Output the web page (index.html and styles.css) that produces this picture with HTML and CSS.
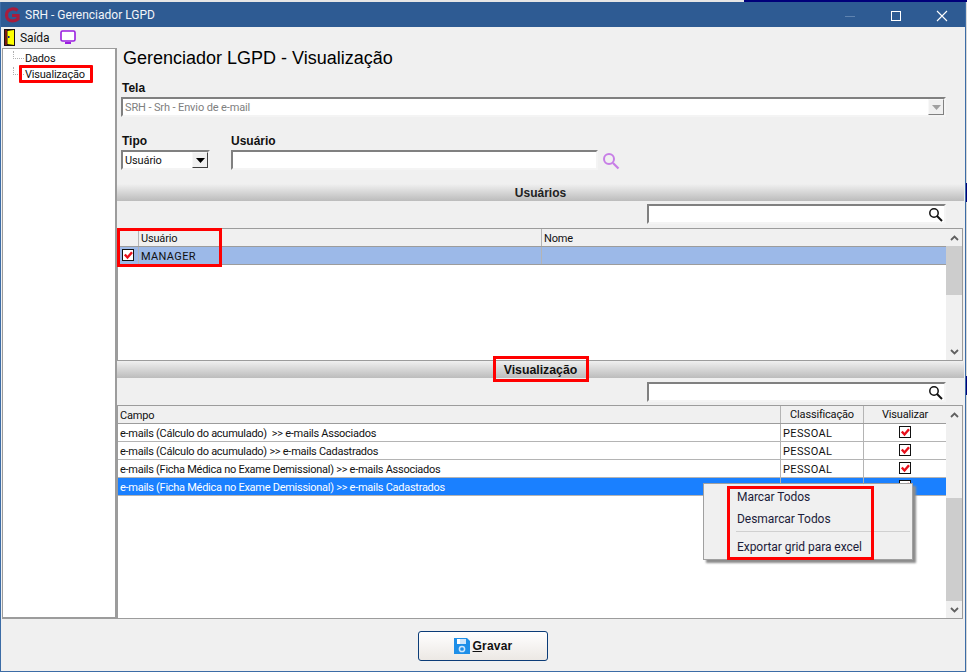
FILE: index.html
```html
<!DOCTYPE html>
<html lang="pt-BR">
<head>
<meta charset="utf-8">
<title>SRH - Gerenciador LGPD</title>
<link rel="stylesheet" href="styles.css">
</head>
<body>
<div class="topstrip"><div class="topstrip-left"></div><div class="topstrip-right"></div></div>
<div class="screen">
<div class="window">
  <header class="titlebar">
    <svg class="logo" width="17" height="16" viewBox="0 0 17 16"><path d="M13.500 3.500C12 2 10 1.600 8 2 4.500 2.800 2.500 5.200 2.500 8 2.500 11.500 5 14 8.500 14 10.500 14 12.500 13.200 14 12V8.500H8" fill="none" stroke="#a81c3c" stroke-width="3.200"/></svg>
    <span class="title-text">SRH - Gerenciador LGPD</span>
    <div class="controls">
      <svg width="46" height="24" viewBox="0 0 46 24"><path d="M18 13.500H28" stroke="#5f83b0" stroke-width="1"/></svg>
      <svg width="46" height="24" viewBox="0 0 46 24"><rect x="18.500" y="8.500" width="9" height="9" fill="none" stroke="#fff" stroke-width="1"/></svg>
      <svg width="46" height="24" viewBox="0 0 46 24"><path d="M18 8L28 18M28 8L18 18" stroke="#fff" stroke-width="1.100"/></svg>
    </div>
  </header>
  <div class="toolbar">
    <svg class="door" width="12" height="18" viewBox="0 0 12 18"><rect width="11" height="17" fill="#1a1010"/><path d="M3.500 2L10 1V16L3.500 15Z" fill="#ffff00"/><rect x="1" y="1" width="2" height="15" fill="#7a1a10"/><rect x="4" y="7" width="1.500" height="2" fill="#10208a"/></svg>
    <span class="toolbar-label">Saída</span>
    <svg class="monitor" width="17" height="15" viewBox="0 0 17 15"><rect x="1" y="1" width="14" height="10" rx="1.500" fill="#fff" stroke="#9a1ee0" stroke-width="1.600"/><rect x="5" y="12" width="6" height="2" fill="#9a1ee0"/></svg>
  </div>
  <div class="content">
    <nav class="sidebar">
      <div class="tree-row"><span class="tree-line"></span><span>Dados</span></div>
      <div class="tree-row"><span class="tree-line"></span><span>Visualização</span></div>
    </nav>
    <main class="main">
      <section class="form">
        <h1 class="page-title">Gerenciador LGPD - Visualização</h1>
        <div class="field-label tela-label">Tela</div>
        <div class="sunken combo-wide">
          <span class="combo-text">SRH - Srh - Envio de e-mail</span>
          <span class="drop drop-off"><svg width="9" height="5" viewBox="0 0 9 5"><path d="M0 0H9L4.500 5Z" fill="#a0a0a0"/></svg></span>
        </div>
        <div class="filter-row">
          <div class="tipo">
            <div class="field-label">Tipo</div>
            <div class="sunken combo-tipo">
              <span class="combo-value">Usuário</span>
              <span class="drop"><svg width="9" height="5" viewBox="0 0 9 5"><path d="M0 0H9L4.500 5Z" fill="#000"/></svg></span>
            </div>
          </div>
          <div class="usuario">
            <div class="field-label">Usuário</div>
            <div class="usuario-input">
              <div class="sunken input-user"></div>
              <svg class="purple-search" width="18" height="18" viewBox="0 0 18 18"><circle cx="7" cy="7" r="5" fill="none" stroke="#c77ee6" stroke-width="2"/><path d="M11 11L16.500 16.500" stroke="#c77ee6" stroke-width="2.200"/></svg>
            </div>
          </div>
        </div>
      </section>

      <div class="section-bar"><span>Usuários</span></div>
      <div class="search-row">
        <div class="sunken search-box">
          <svg width="15" height="15" viewBox="0 0 15 15"><circle cx="6" cy="6" r="4.200" fill="none" stroke="#111" stroke-width="1.500"/><path d="M9 9L14 14" stroke="#111" stroke-width="2"/></svg>
        </div>
      </div>
      <div class="grid grid-users">
        <div class="grid-body">
          <div class="row row-head cols-users"><div class="cell"></div><div class="cell pad">Usuário</div><div class="cell pad">Nome</div></div>
          <div class="row row-marked cols-users">
            <div class="cell cell-center"><svg class="check" width="13" height="13" viewBox="0 0 13 13"><rect x=".5" y=".5" width="11" height="11" fill="#fff" stroke="#111"/><path d="M2.800 5.500L5.500 8.500L10 3.200" fill="none" stroke="#e8101c" stroke-width="2.400"/></svg></div>
            <div class="cell pad caps">MANAGER</div><div class="cell"></div>
          </div>
        </div>
        <div class="scroll">
          <div class="arrow"><svg width="9" height="6" viewBox="0 0 9 6"><path d="M1 5L4.500 1.500L8 5" fill="none" stroke="#606060" stroke-width="1.800"/></svg></div>
          <div class="thumb thumb-users"></div>
          <div class="track"></div>
          <div class="arrow"><svg width="9" height="6" viewBox="0 0 9 6"><path d="M1 1L4.500 4.500L8 1" fill="none" stroke="#606060" stroke-width="1.800"/></svg></div>
        </div>
      </div>

      <div class="section-bar section-bar-view"><span>Visualização</span></div>
      <div class="search-row search-row-view">
        <div class="sunken search-box">
          <svg width="15" height="15" viewBox="0 0 15 15"><circle cx="6" cy="6" r="4.200" fill="none" stroke="#111" stroke-width="1.500"/><path d="M9 9L14 14" stroke="#111" stroke-width="2"/></svg>
        </div>
      </div>
      <div class="grid grid-view">
        <div class="grid-body">
          <div class="row row-head cols-view"><div class="cell pad-s">Campo</div><div class="cell cell-center">Classificação</div><div class="cell cell-center">Visualizar</div></div>
          <div class="row cols-view"><div class="cell pad-s">e-mails (Cálculo do acumulado)&nbsp; &gt;&gt; e-mails Associados</div><div class="cell pad-s caps">PESSOAL</div><div class="cell cell-center"><svg class="check" width="13" height="13" viewBox="0 0 13 13"><rect x=".5" y=".5" width="11" height="11" fill="#fff" stroke="#111"/><path d="M2.800 5.500L5.500 8.500L10 3.200" fill="none" stroke="#e8101c" stroke-width="2.400"/></svg></div></div>
          <div class="row cols-view"><div class="cell pad-s">e-mails (Cálculo do acumulado) &gt;&gt; e-mails Cadastrados</div><div class="cell pad-s caps">PESSOAL</div><div class="cell cell-center"><svg class="check" width="13" height="13" viewBox="0 0 13 13"><rect x=".5" y=".5" width="11" height="11" fill="#fff" stroke="#111"/><path d="M2.800 5.500L5.500 8.500L10 3.200" fill="none" stroke="#e8101c" stroke-width="2.400"/></svg></div></div>
          <div class="row cols-view"><div class="cell pad-s">e-mails (Ficha Médica no Exame Demissional) &gt;&gt; e-mails Associados</div><div class="cell pad-s caps">PESSOAL</div><div class="cell cell-center"><svg class="check" width="13" height="13" viewBox="0 0 13 13"><rect x=".5" y=".5" width="11" height="11" fill="#fff" stroke="#111"/><path d="M2.800 5.500L5.500 8.500L10 3.200" fill="none" stroke="#e8101c" stroke-width="2.400"/></svg></div></div>
          <div class="row row-selected cols-view"><div class="cell pad-s">e-mails (Ficha Médica no Exame Demissional) &gt;&gt; e-mails Cadastrados</div><div class="cell pad-s caps">PESSOAL</div><div class="cell cell-center"><svg class="check" width="13" height="13" viewBox="0 0 13 13"><rect x=".5" y=".5" width="11" height="11" fill="#fff" stroke="#111"/><path d="M2.800 5.500L5.500 8.500L10 3.200" fill="none" stroke="#e8101c" stroke-width="2.400"/></svg></div></div>
        </div>
        <div class="scroll">
          <div class="arrow"><svg width="9" height="6" viewBox="0 0 9 6"><path d="M1 5L4.500 1.500L8 5" fill="none" stroke="#606060" stroke-width="1.800"/></svg></div>
          <div class="track track-view"></div>
          <div class="thumb thumb-view"></div>
          <div class="arrow"><svg width="9" height="6" viewBox="0 0 9 6"><path d="M1 1L4.500 4.500L8 1" fill="none" stroke="#606060" stroke-width="1.800"/></svg></div>
        </div>
      </div>
    </main>
  </div>
  <footer class="footer">
    <button class="save" type="button">
      <svg width="16" height="16" viewBox="0 0 16 16"><path d="M0 0H13L16 3V16H0Z" fill="#1e8fe8"/><rect x="3" y="1" width="9" height="5" fill="#cfe6fa"/><rect x="3" y="1" width="3" height="5" fill="#fff"/><circle cx="8" cy="11" r="2.600" fill="none" stroke="#cfe6fa" stroke-width="1.500"/></svg>
      <span><u>G</u>ravar</span>
    </button>
  </footer>

  <div class="menu">
    <div class="menu-item">Marcar Todos</div>
    <div class="menu-item">Desmarcar Todos</div>
    <div class="menu-sep"></div>
    <div class="menu-item">Exportar grid para excel</div>
  </div>
  <div class="mark mark-tree"></div>
  <div class="mark mark-grid"></div>
  <div class="mark mark-section"></div>
  <div class="mark mark-menu"></div>
</div>
<div class="sliver"></div>
</div>
</body>
</html>
```

FILE: styles.css
```css
* { box-sizing: border-box; }
html, body { margin: 0; padding: 0; height: 100%; overflow: hidden; }
body { background: #f0f0f0; font-family: Roboto, "Liberation Sans", Arial, sans-serif; font-size: 11px; letter-spacing: -.12px; color: #111; }

.topstrip { display: flex; height: 2px; }
.topstrip-left { width: 744px; background: #e6e6e6; }
.topstrip-right { flex: 1; background: #00007a; }

.screen { display: flex; height: 670px; }
.window { position: relative; width: 966px; height: 670px; display: flex; flex-direction: column; background: #f0f0f0; border: 1px solid #3c6ca6; border-top: 0; }
.sliver { flex: 1; background: linear-gradient(#d8d8d8 0 181px, #00007a 181px 200px, #d8d8d8 200px 374px, #00007a 374px 393px, #d8d8d8 393px); }

.titlebar { height: 25px; flex: none; display: flex; align-items: center; background: #2e5b93; color: #fff; padding-left: 3px; }
.logo { flex: none; }
.title-text { margin-left: 4px; font-size: 12px; letter-spacing: 0; color: #f2f5f9; }
.controls { margin-left: auto; display: flex; align-items: center; }
.controls svg { display: block; }

.toolbar { height: 21px; flex: none; display: flex; align-items: center; padding-left: 3px; }
.door { flex: none; }
.toolbar-label { margin-left: 4px; font-size: 12px; }
.monitor { margin-left: 11px; flex: none; }

.content { height: 571px; flex: none; display: flex; }
.sidebar { width: 115px; margin-left: 1px; height: 571px; flex: none; background: #fff; border: 1px solid #9c9c9c; border-width: 1px 2px 2px 1px; padding-top: 2px; padding-left: 10px; letter-spacing: -.2px; }
.tree-row { display: flex; height: 16px; line-height: 16px; }
.tree-line { width: 11px; height: 8px; margin-right: 1px; border-left: 1px dotted #b0b0b0; border-bottom: 1px dotted #b0b0b0; }

.main { flex: 1; min-width: 0; display: flex; flex-direction: column; }
.form { height: 136px; flex: none; padding-left: 4px; }
.page-title { margin: 0 0 0 2px; height: 21px; line-height: 21px; font-family: "Liberation Sans", Arial, sans-serif; font-size: 18px; font-weight: normal; letter-spacing: 0; color: #000; }
.field-label { height: 14px; line-height: 14px; margin-left: 1px; font-family: "Liberation Sans", Arial, sans-serif; font-size: 12px; font-weight: bold; letter-spacing: 0; color: #111; margin-bottom: 2px; }
.usuario .field-label { margin-left: 0; }
.tela-label { margin-top: 12px; }

.sunken { display: flex; align-items: center; height: 20px; background: #fff; border-style: solid; border-width: 2px; border-color: #808080 #f4f4f4 #f4f4f4 #808080; }
.combo-wide { width: 825px; color: #808080; }
.combo-text { flex: 1; padding: 1px 0 0 2px; }
.drop { display: flex; align-items: center; justify-content: center; width: 16px; height: 16px; background: #f0f0f0; border: 1px solid; border-color: #f8f8f8 #404040 #404040 #f8f8f8; }
.drop-off { border-color: #f8f8f8 #808080 #808080 #f8f8f8; }

.filter-row { display: flex; margin-top: 17px; }
.tipo { width: 110px; }
.combo-tipo { width: 89px; }
.combo-value { flex: 1; padding-left: 2px; }
.usuario-input { display: flex; align-items: center; }
.input-user { width: 367px; }
.purple-search { margin-left: 4px; margin-top: 1px; }

.section-bar { height: 17px; flex: none; background: linear-gradient(#f0f0f0, #bcbcbc); text-align: center; margin-right: 1px; font-family: "Liberation Sans", Arial, sans-serif; font-weight: bold; font-size: 12px; letter-spacing: 0; line-height: 18px; color: #222; }
.section-bar-view { color: #111; font-size: 12.300px; }
.search-row { height: 27px; flex: none; padding: 3px 0 0 530px; }
.search-row-view { padding-top: 4px; }
.search-box { width: 299px; justify-content: flex-end; padding-right: 1px; }

.grid { flex: none; display: flex; width: 846px; border: 1px solid #9c9c9c; background: #fff; }
.grid-users { height: 133px; }
.grid-view { height: 214px; }
.grid-body { width: 828px; flex: none; }
.row { display: grid; height: 18px; border-bottom: 1px solid #b4b4b4; line-height: 19px; letter-spacing: -.27px; }
.cols-users { grid-template-columns: 21px 403px 1fr; }
.cols-view { grid-template-columns: 663px 83px 1fr; }
.row-head { background: #f0f0f0; border-bottom-color: #9c9c9c; letter-spacing: -.18px; }
.row-marked { background: #9cb9e8; border-bottom-color: #9c9c9c; }
.row-selected { background: #1a80ff; color: #fff; }
.cell { border-right: 1px solid #b4b4b4; white-space: nowrap; overflow: hidden; }
.cell:last-child { border-right: 0; }
.cell-center { text-align: center; display: flex; align-items: center; justify-content: center; }
.pad { padding-left: 2px; }
.pad-s { padding-left: 2px; }
.caps { letter-spacing: .35px; }
.check { display: block; flex: none; }

.scroll { flex: 1; display: flex; flex-direction: column; background: #f0f0f0; }
.arrow { height: 17px; flex: none; display: flex; align-items: center; justify-content: center; }
.thumb { background: #cdcdcd; }
.thumb-users { height: 49px; }
.thumb-view { flex: 1; }
.track { flex: 1; }
.track-view { flex: none; height: 75px; }

.footer { flex: 1; display: flex; align-items: flex-start; justify-content: center; padding-top: 12px; }
.save { display: flex; align-items: center; justify-content: center; gap: 3px; width: 130px; height: 30px; padding: 0; background: linear-gradient(#ffffff, #ece8e4); border: 1px solid #0b3c78; border-radius: 3px; font: bold 12px "Liberation Sans", Arial, sans-serif; letter-spacing: .2px; color: #111; }

.menu { position: absolute; left: 702px; top: 481px; width: 210px; height: 77px; padding: 3px 2px 0 33px; background: #f0f0f0; border: 1px solid #a0a0a0; box-shadow: 3px 3px 2px #8c8c8c; }
.menu-item { height: 22px; line-height: 21px; font-size: 12px; letter-spacing: -.05px; color: #1c1c3a; }
.menu-sep { height: 1px; margin: 0 0 5px -1px; background: #d0d0d0; }
.mark { position: absolute; border: 3px solid #f00; }
.mark-tree { left: 18px; top: 63px; width: 74px; height: 18px; border-radius: 1px; }
.mark-grid { left: 116px; top: 226px; width: 105px; height: 39px; }
.mark-section { left: 492px; top: 354px; width: 96px; height: 26px; }
.mark-menu { left: 726px; top: 484px; width: 147px; height: 74px; }
```
